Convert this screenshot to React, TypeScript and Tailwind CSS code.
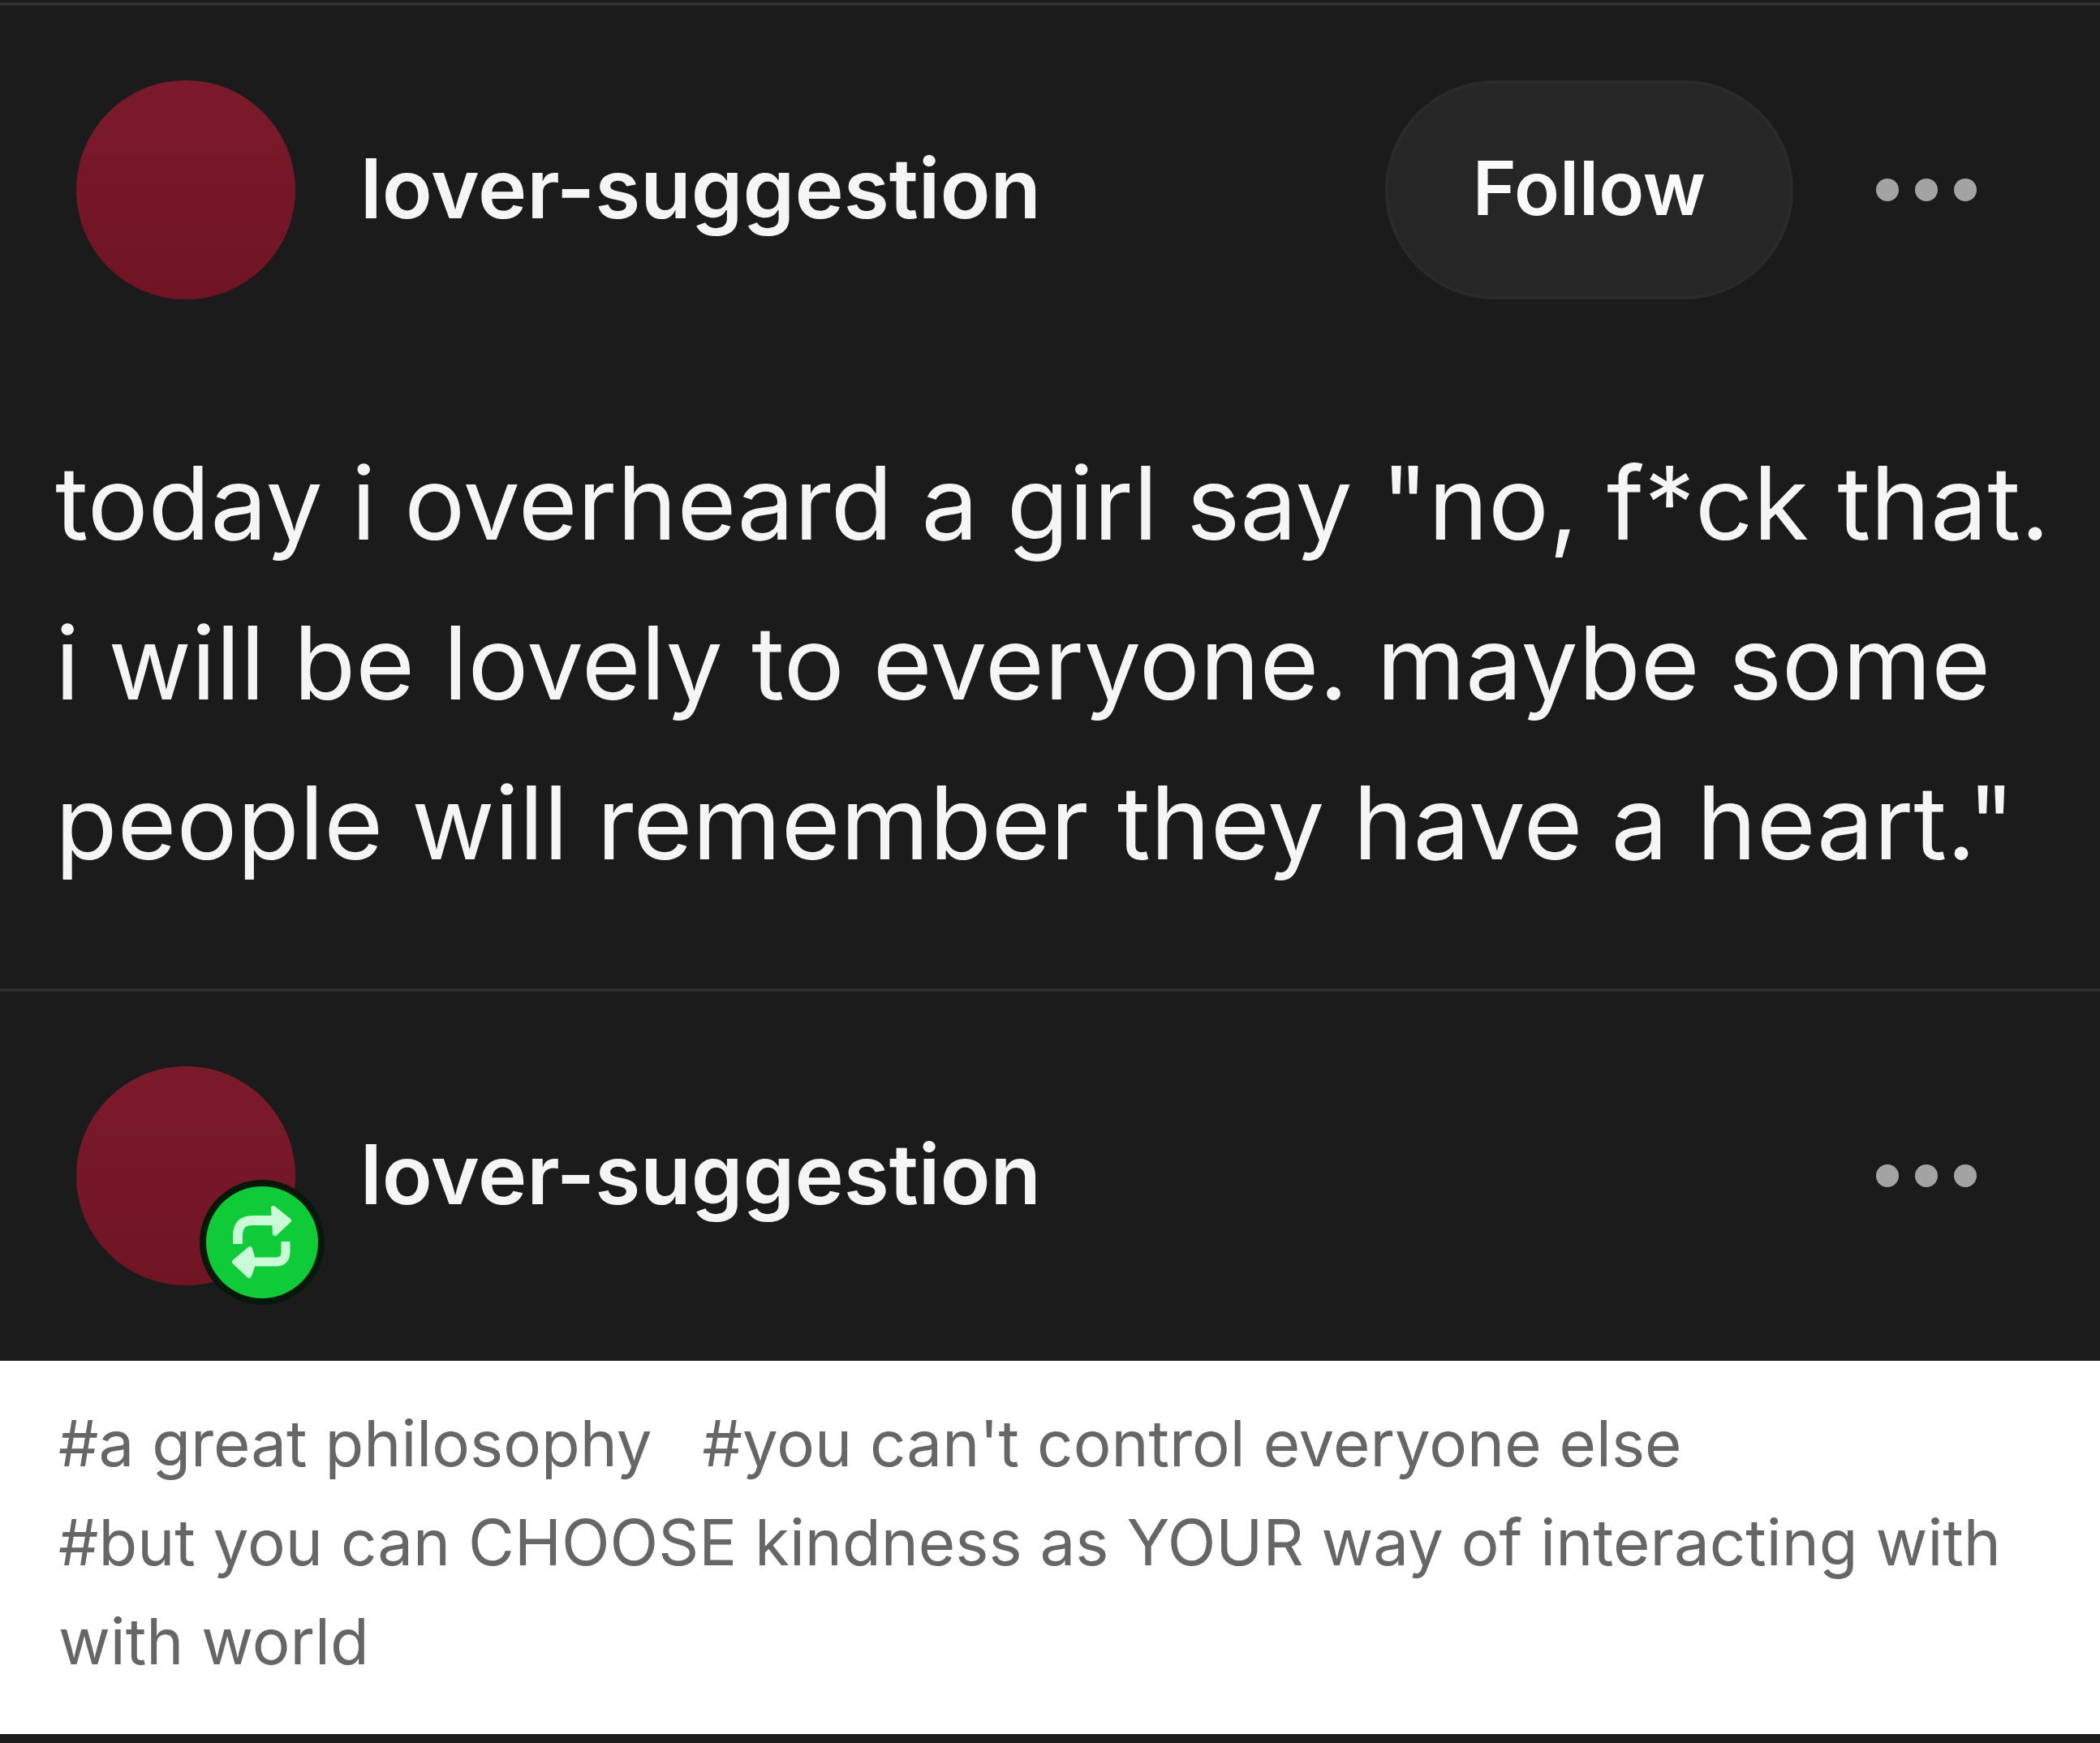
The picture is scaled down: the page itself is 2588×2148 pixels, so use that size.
const BLOG_NAME = "lover-suggestion";

const postLines = [
  'today i overheard a girl say "no, f*ck that.',
  "i will be lovely to everyone. maybe some",
  'people will remember they have a heart."',
];

const tagRows = [
  ["#a great philosophy", "#you can't control everyone else"],
  ["#but you can CHOOSE kindness as YOUR way of interacting with with world"],
];

function ReblogIcon() {
  return (
    <svg viewBox="0 0 76 92" fill="none" className="h-[92px] w-[76px]" aria-hidden="true">
      <g stroke="#c9fbd6" strokeLinejoin="round">
        <path d="M8 48V38Q8 19 26 19H56" strokeWidth="12" />
        <path d="M67 45V58Q67 70 55 70H20" strokeWidth="11" />
        <path d="M52 4 71 19 54 35Z" fill="#c9fbd6" strokeWidth="6" />
        <path d="M23 54 4 70 22 87 26 76V64Z" fill="#c9fbd6" strokeWidth="6" />
      </g>
    </svg>
  );
}

function MoreButton() {
  return (
    <button type="button" aria-label="More options" className="flex h-[72px] items-center gap-5">
      <span className="size-7 rounded-full bg-[#a3a3a3]" />
      <span className="size-7 rounded-full bg-[#a3a3a3]" />
      <span className="size-7 rounded-full bg-[#a3a3a3]" />
    </button>
  );
}

function PostHeader({ reblogged = false, canFollow = false }: { reblogged?: boolean; canFollow?: boolean }) {
  return (
    <header className="flex items-center pl-[94px] pr-[152px] pt-[92px]">
      <div className="relative shrink-0">
        <div className="size-[270px] rounded-full bg-linear-to-b from-[#7b1a2b] to-[#701424]" />
        {reblogged && (
          <div className="absolute -bottom-6 -right-9 flex size-[154px] items-center justify-center rounded-full bg-[#06180a]">
            <div className="flex size-[138px] items-center justify-center rounded-full bg-[#0fcb38]">
              <ReblogIcon />
            </div>
          </div>
        )}
      </div>
      <a
        href="#blog"
        className="ml-20 whitespace-nowrap pb-1 text-[102px] font-semibold leading-[128px] text-[#f5f5f5]"
      >
        {BLOG_NAME}
      </a>
      <div className="ml-auto flex items-center gap-[102px]">
        {canFollow && (
          <button
            type="button"
            className="h-[270px] rounded-full border-4 border-[#2a2a2a] bg-[#262626] px-[104px] pb-1 text-[92px] font-semibold text-[#fafafa]"
          >
            Follow
          </button>
        )}
        <MoreButton />
      </div>
    </header>
  );
}

export default function App() {
  return (
    <main className="min-h-screen overflow-x-hidden bg-[#1b1b1b] pt-[3px] font-['Inter',sans-serif]">
      <article className="border-t-4 border-[#2f2f2f] pb-[106px]">
        <PostHeader canFollow />
        <p className="mt-[152px] whitespace-nowrap pl-[68px] text-[125px] leading-[197px] text-[#f5f5f5]">
          {postLines.map((line) => (
            <span key={line} className="block">
              {line}
            </span>
          ))}
        </p>
      </article>

      <article className="border-t-4 border-[#2f2f2f] pb-[93px]">
        <PostHeader reblogged />
      </article>

      <footer className="bg-white px-[72px] pb-[53px] pt-[41px] text-[78px] leading-[122px] text-[#666]">
        {tagRows.map((row) => (
          <div key={row[0]} className="flex gap-[62px]">
            {row.map((tag) => (
              <a key={tag} href="#tag">
                {tag}
              </a>
            ))}
          </div>
        ))}
      </footer>
    </main>
  );
}
